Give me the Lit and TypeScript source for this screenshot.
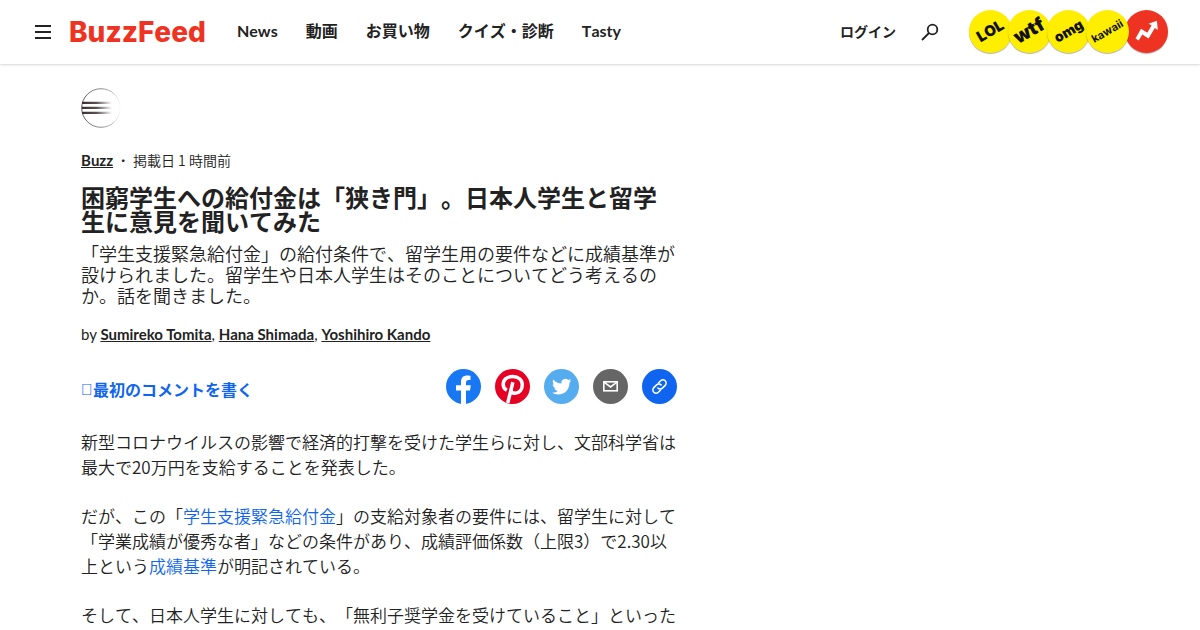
import { LitElement, html, css, svg } from "lit";
import { customElement } from "lit/decorators.js";

const NAV = ["News", "動画", "お買い物", "クイズ・診断", "Tasty"];

const BADGES = [
  { label: "LOL", cls: "lol" },
  { label: "wtf", cls: "wtf" },
  { label: "omg", cls: "omg" },
  { label: "kawaii", cls: "kawaii" },
];

const AUTHORS = ["Sumireko Tomita", "Hana Shimada", "Yoshihiro Kando"];

const SHARES = [
  {
    name: "Facebook",
    art: svg`<circle cx="17.5" cy="17.5" r="17.5" fill="#1877f2"/><path fill="#fff" d="M15 35V21.500h-5v-5.200h5V13c0-4.500 2.500-6.500 6.300-6.500 1.600 0 3.200.3 3.200.3v4.300h-2c-1.700 0-2.500 1-2.500 2.300v2.900h4.800l-.8 5.200h-4V35z"/>`,
  },
  {
    name: "Pinterest",
    art: svg`<circle cx="17.500" cy="17.500" r="17.500" fill="#e60023"/><path fill="none" stroke="#fff" stroke-width="3.500" stroke-linecap="butt" d="M11.800 21.300C9.900 20.300 8.200 18 8.200 15.300 8.200 10.900 12 7.400 17.700 7.400c5.700 0 9.600 3.500 9.600 8.300 0 5-3.200 8.600-7.200 8.600-2 0-3.500-1-3.900-2.400M17.900 13.300 12.700 34"/>`,
  },
  {
    name: "Twitter",
    art: svg`<circle cx="17.500" cy="17.500" r="17.500" fill="#55acee"/><path fill="#fff" transform="translate(8 7.900) scale(.81)" d="M23.950 4.570a10 10 0 0 1-2.820.77 4.960 4.960 0 0 0 2.160-2.720c-.95.550-2 .95-3.130 1.180a4.920 4.920 0 0 0-8.380 4.480C7.690 8.100 4.070 6.130 1.640 3.160a4.820 4.820 0 0 0-.67 2.480c0 1.710.87 3.210 2.190 4.100a4.900 4.900 0 0 1-2.230-.62v.06a4.920 4.920 0 0 0 3.950 4.830 5 5 0 0 1-2.210.080 4.940 4.940 0 0 0 4.600 3.420A9.870 9.870 0 0 1 0 19.540a14 14 0 0 0 7.550 2.210c9.050 0 14-7.500 14-13.980 0-.21 0-.42-.02-.63a9.940 9.940 0 0 0 2.460-2.550z"/>`,
  },
  {
    name: "メール",
    art: svg`<circle cx="17.500" cy="17.500" r="17.500" fill="#666"/><g fill="none" stroke="#fff" stroke-width="1.600"><rect x="10.800" y="12.800" width="13.400" height="9"/><path d="m11 13.200 6.500 4.800 6.500-4.800"/></g>`,
  },
  {
    name: "リンクをコピー",
    art: svg`<circle cx="17.500" cy="17.500" r="17.500" fill="#0f65ef"/><g fill="none" stroke="#fff" stroke-width="1.300" stroke-linecap="round" transform="translate(17.500 17.500) rotate(-45) scale(1.150)"><path d="M-1.500 2.800H-4.200a2.800 2.800 0 0 1 0-5.600h3.400a2.800 2.800 0 0 1 2.800 2.800"/><path d="M1.500-2.800h2.700a2.800 2.800 0 0 1 0 5.600H.8A2.800 2.800 0 0 1-2 0"/></g>`,
  },
];

@customElement("app-root")
export class AppRoot extends LitElement {
  static styles = css`
    :host {
      display: block;
      height: 100vh;
      overflow: hidden;
      background: #fff;
      color: #222;
      font-family: Lato, "Noto Sans CJK JP", sans-serif;
      font-kerning: none;
      text-spacing-trim: space-all;
    }
    * { box-sizing: border-box; }
    a { color: inherit; text-decoration: none; }
    button { border: 0; padding: 0; background: none; color: inherit; font: inherit; }
    svg { display: block; }
    h1, p { margin: 0; }
    .header {
      display: flex;
      align-items: center;
      height: 64px;
      padding: 0 32px 0 35px;
      box-shadow: 0 1px 2px rgba(0, 0, 0, 0.16);
    }
    .logo {
      width: 135px;
      margin-left: 18px;
      color: #ee3322;
      font-family: Inter, sans-serif;
      font-size: 28px;
      font-weight: 800;
      line-height: 40px;
    }
    .nav {
      display: flex;
      gap: 28px;
      margin-left: 33px;
      padding-bottom: 2px;
      font-size: 16px;
      font-weight: 700;
      line-height: 24px;
      white-space: nowrap;
    }
    .tools {
      display: flex;
      align-items: center;
      margin-left: auto;
    }
    .login { font-size: 14px; font-weight: 700; line-height: 20px; }
    .search { margin-left: 25px; }
    .badges { display: flex; margin-left: 30px; padding-bottom: 2px; isolation: isolate; }
    .badge {
      display: grid;
      place-items: center;
      flex: none;
      width: 43px;
      height: 43px;
      border-radius: 50%;
      background: #ffee00;
      color: #111;
      box-shadow: 0 1px 1px rgba(0, 0, 0, 0.3);
      font-family: Inter, sans-serif;
      font-weight: 900;
      line-height: 20px;
    }
    .badge + .badge { margin-left: -4px; }
    .trend { background: #ee3322; }
    .word { transform: rotate(-30deg); }
    .lol { font-size: 15px; }
    .wtf { font-size: 19px; }
    .omg { font-size: 14px; }
    .kawaii { z-index: 1; font-size: 11px; font-weight: 700; }
    .main { max-width: 1038px; margin: 0 auto; padding-top: 24px; }
    .article { max-width: 596px; }
    .meta {
      display: flex;
      gap: 8px;
      margin-top: 22px;
      font-size: 14px;
      line-height: 20px;
    }
    .topic { font-size: 15px; }
    .light { font-family: "Noto Sans CJK JP", sans-serif; font-weight: 350; }
    .bold { font-weight: 700; text-decoration: underline; }
    .title { margin-top: 16px; font-size: 24px; line-height: 24px; font-weight: 700; }
    .dek { margin-top: 9px; font-size: 18px; line-height: 21px; }
    .byline { margin-top: 18px; font-size: 15px; line-height: 20px; font-kerning: normal; }
    .actions {
      display: flex;
      align-items: center;
      justify-content: space-between;
      margin-top: 25px;
    }
    .comment {
      display: flex;
      align-items: center;
      padding-top: 6px;
      color: #0f65ef;
      font-size: 16px;
      line-height: 24px;
      font-weight: 700;
    }
    .box { width: 12px; font-family: "Liberation Sans", sans-serif; font-weight: 400; }
    .shares { display: flex; gap: 14px; }
    .body { margin-top: 25px; font-size: 17px; line-height: 25px; }
    .body p + p { margin-top: 24px; }
    .body a { color: #0f65ef; }
  `;

  render() {
    return html`
      <header class="header">
        <button aria-label="メニュー">
          <svg width="16" height="14" viewBox="0 0 16 14"><path fill="#222" d="M0 0h16v2H0zM0 6h16v2H0zM0 12h16v2H0z"/></svg>
        </button>
        <a class="logo" href="#">BuzzFeed</a>
        <nav class="nav">${NAV.map((n) => html`<a href="#">${n}</a>`)}</nav>
        <div class="tools">
          <a class="login" href="#">ログイン</a>
          <button class="search" aria-label="検索">
            <svg width="18" height="18" viewBox="0 0 18 18" fill="none" stroke="#222" stroke-width="1.800"><circle cx="11.500" cy="6.500" r="4.800"/><path d="m8 10-7 7"/></svg>
          </button>
          <div class="badges">
            ${BADGES.map((b) => html`<a class="badge ${b.cls}" href="#"><span class="word">${b.label}</span></a>`)}
            <a class="badge trend" href="#" aria-label="トレンド">
              <svg width="43" height="43" viewBox="0 0 43 43"><path fill="#fff" d="m10.500 28.500 5.500-9.800 6.300 4 4.300-7.200-3-1.800 8.300-3 .9 9.200-3-1.800-6.200 10.300-6.300-4-3.600 6.200z"/></svg>
            </a>
          </div>
        </div>
      </header>
      <main class="main">
        <article class="article">
          <svg width="40" height="40" viewBox="0 0 40 40">
            <defs>
              <linearGradient id="fade" gradientUnits="userSpaceOnUse" x1="0" y1="0" x2="40" y2="0"><stop offset="0" stop-color="#555"/><stop offset=".7" stop-color="#aaa"/><stop offset="1" stop-color="#fff"/></linearGradient>
              <linearGradient id="speed" gradientUnits="userSpaceOnUse" x1="0" y1="0" x2="31" y2="0"><stop offset="0" stop-color="#3a2c2e"/><stop offset=".5" stop-color="#5d5153"/><stop offset="1" stop-color="#fff"/></linearGradient>
            </defs>
            <circle cx="20" cy="20" r="19.300" fill="none" stroke="url(#fade)"/>
            <path fill="url(#speed)" d="M1 13.700h30v2.200H1zM1 18.700h30v2.200H1zM1 23.700h30v2.200H1z"/>
          </svg>
          <div class="meta">
            <a class="bold topic" href="#">Buzz</a><b>·</b><span class="light">掲載日 1 時間前</span>
          </div>
          <h1 class="title">困窮学生への給付金は「狭き門」。日本人学生と留学生に意見を聞いてみた</h1>
          <p class="dek light">「学生支援緊急給付金」の給付条件で、留学生用の要件などに成績基準が設けられました。留学生や日本人学生はそのことについてどう考えるのか。話を聞きました。</p>
          <p class="byline">by ${AUTHORS.map((a, i) => html`${i ? ", " : ""}<a class="bold" href="#">${a}</a>`)}</p>
          <div class="actions">
            <a class="comment" href="#"><span class="box">&#xE0A9;</span>最初のコメントを書く</a>
            <div class="shares">
              ${SHARES.map((s) => html`<button aria-label=${s.name}><svg width="35" height="35" viewBox="0 0 35 35">${s.art}</svg></button>`)}
            </div>
          </div>
          <div class="body light">
            <p>新型コロナウイルスの影響で経済的打撃を受けた学生らに対し、文部科学省は最大で20万円を支給することを発表した。</p>
            <p>だが、この「<a href="#">学生支援緊急給付金</a>」の支給対象者の要件には、留学生に対して「学業成績が優秀な者」などの条件があり、成績評価係数（上限3）で2.30以上という<a href="#">成績基準</a>が明記されている。</p>
            <p>そして、日本人学生に対しても、「無利子奨学金を受けていること」といった</p>
          </div>
        </article>
      </main>
    `;
  }
}
